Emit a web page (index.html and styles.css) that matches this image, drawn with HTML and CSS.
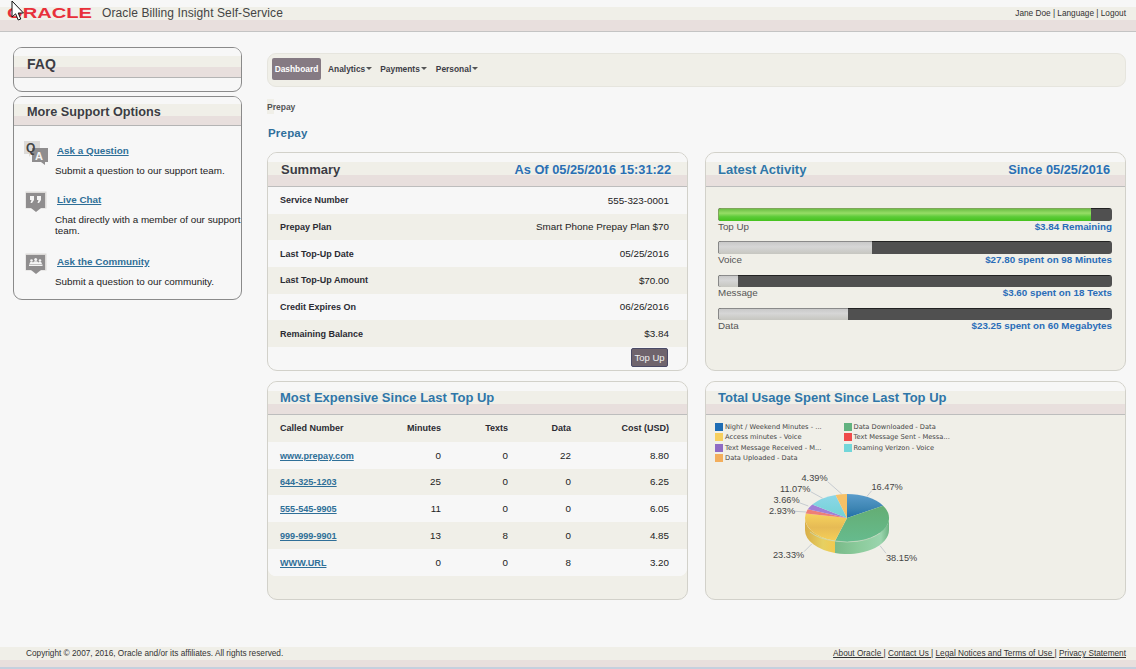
FILE: index.html
```html
<!DOCTYPE html>
<html lang="en">
<head>
<meta charset="utf-8">
<title>Oracle Billing Insight Self-Service</title>
<link rel="stylesheet" href="styles.css">
</head>
<body>
<svg class="cursor" width="16" height="22" viewBox="0 0 16 22"><path d="M1 1 L1 17 L4.6 13.8 L7.2 20 L9.8 19 L7.2 13 L12.5 13 Z" fill="#fff" stroke="#111" stroke-width="1"/></svg>
<header class="top">
  <div class="brand">
    <svg class="logo" width="86" height="16" viewBox="0 0 86 16"><text x="0" y="12" textLength="85" lengthAdjust="spacingAndGlyphs" class="logo-text">ORACLE</text></svg>
    <span class="app-title">Oracle Billing Insight Self-Service</span>
  </div>
  <div class="user">Jane Doe | Language | Logout</div>
</header>

<div class="page">
  <aside class="side">
    <section class="box">
      <h2 class="box-head box-head-faq">FAQ</h2>
      <div class="box-empty"></div>
    </section>
    <section class="box">
      <h2 class="box-head">More Support Options</h2>
      <div class="support">
        <div class="item item-qa">
          <svg class="icon" width="26" height="26" viewBox="0 0 26 26">
            <path d="M1 1h16v13h-9l-2 3v-3H1z" fill="#dcdad8"/>
            <path d="M9 8h16v14h-3v3l-4-3H9z" fill="#8f8d8e"/>
            <text x="3" y="11.500" class="ic-q">Q</text>
            <text x="12" y="19.500" class="ic-a">A</text>
          </svg>
          <div class="item-text">
            <a class="link" href="#">Ask a Question</a>
            <p class="desc">Submit a question to our support team.</p>
          </div>
        </div>
        <div class="item item-chat">
          <svg class="icon" width="22" height="22" viewBox="0 0 22 22">
            <rect x="0.5" y="0.5" width="21" height="17" fill="#dcdad8"/>
            <path d="M1 2h19v15h-4l-5 4-5-4H1z" fill="#8f8d8e"/>
            <path d="M5 5h4v4l-2 3H5.500l1-3H5zM12 5h4v4l-2 3h-1.500l1-3H12z" fill="#f4f4f4"/>
          </svg>
          <div class="item-text">
            <a class="link" href="#">Live Chat</a>
            <p class="desc">Chat directly with a member of our support<br>team.</p>
          </div>
        </div>
        <div class="item item-comm">
          <svg class="icon" width="22" height="22" viewBox="0 0 22 22">
            <rect x="0.5" y="0.5" width="21" height="17" fill="#dcdad8"/>
            <path d="M1 2h19v15h-4l-5 4-5-4H1z" fill="#8f8d8e"/>
            <path d="M4 11.500h13.500v1.500H4z" fill="#f4f4f4"/>
            <circle cx="6.500" cy="7.500" r="1.300" fill="#f4f4f4"/>
            <circle cx="15" cy="7.500" r="1.300" fill="#f4f4f4"/>
            <circle cx="10.700" cy="6.500" r="1.500" fill="#f4f4f4"/>
            <path d="M4.500 11c0-1.500 1-2.200 2-2.200.7 0 1.200.2 1.500.6.5-.7 1.500-1.100 2.700-1.100s2.200.4 2.700 1.100c.3-.4.8-.6 1.500-.6 1 0 2 .7 2 2.200z" fill="#f4f4f4"/>
          </svg>
          <div class="item-text">
            <a class="link" href="#">Ask the Community</a>
            <p class="desc">Submit a question to our community.</p>
          </div>
        </div>
      </div>
    </section>
  </aside>

  <main class="main">
    <nav class="nav">
      <a class="nav-active" href="#">Dashboard</a>
      <a class="nav-item nav-analytics" href="#">Analytics<i class="caret"></i></a>
      <a class="nav-item nav-payments" href="#">Payments<i class="caret"></i></a>
      <a class="nav-item nav-personal" href="#">Personal<i class="caret"></i></a>
    </nav>
    <div class="crumb">Prepay</div>
    <h1 class="title">Prepay</h1>

    <div class="cards">
      <section class="card card-plain">
        <div class="card-head card-head-tall">
          <span class="head-dark">Summary</span>
          <span class="head-date">As Of 05/25/2016 15:31:22</span>
        </div>
        <table class="kv">
          <tr><th>Service Number</th><td>555-323-0001</td></tr>
          <tr class="alt"><th>Prepay Plan</th><td>Smart Phone Prepay Plan $70</td></tr>
          <tr><th>Last Top-Up Date</th><td>05/25/2016</td></tr>
          <tr class="alt"><th>Last Top-Up Amount</th><td>$70.00</td></tr>
          <tr><th>Credit Expires On</th><td>06/26/2016</td></tr>
          <tr class="alt"><th>Remaining Balance</th><td>$3.84</td></tr>
        </table>
        <div class="actions"><button class="btn" type="button">Top Up</button></div>
      </section>

      <section class="card">
        <div class="card-head card-head-tall">
          <span class="head-blue">Latest Activity</span>
          <span class="head-date head-date-since">Since 05/25/2016</span>
        </div>
        <div class="meters">
          <div class="meter">
            <div class="bar"><div class="fill fill-green" style="width:94.7%"></div></div>
            <div class="meter-row"><span>Top Up</span><b>$3.84 Remaining</b></div>
          </div>
          <div class="meter">
            <div class="bar"><div class="fill" style="width:39%"></div></div>
            <div class="meter-row"><span>Voice</span><b>$27.80 spent on 98 Minutes</b></div>
          </div>
          <div class="meter">
            <div class="bar"><div class="fill" style="width:5%"></div></div>
            <div class="meter-row"><span>Message</span><b>$3.60 spent on 18 Texts</b></div>
          </div>
          <div class="meter">
            <div class="bar"><div class="fill" style="width:33%"></div></div>
            <div class="meter-row"><span>Data</span><b>$23.25 spent on 60 Megabytes</b></div>
          </div>
        </div>
      </section>

      <section class="card">
        <div class="card-head">
          <span class="head-blue">Most Expensive Since Last Top Up</span>
        </div>
        <table class="costs">
          <colgroup><col class="c1"><col class="c2"><col class="c3"><col class="c4"><col class="c5"></colgroup>
          <thead>
            <tr class="alt"><th>Called Number</th><th>Minutes</th><th>Texts</th><th>Data</th><th>Cost (USD)</th></tr>
          </thead>
          <tbody>
            <tr><td><a class="link link-small" href="#">www.prepay.com</a></td><td>0</td><td>0</td><td>22</td><td>8.80</td></tr>
            <tr class="alt"><td><a class="link link-small" href="#">644-325-1203</a></td><td>25</td><td>0</td><td>0</td><td>6.25</td></tr>
            <tr><td><a class="link link-small" href="#">555-545-9905</a></td><td>11</td><td>0</td><td>0</td><td>6.05</td></tr>
            <tr class="alt"><td><a class="link link-small" href="#">999-999-9901</a></td><td>13</td><td>8</td><td>0</td><td>4.85</td></tr>
            <tr class="last"><td><a class="link link-small" href="#">WWW.URL</a></td><td>0</td><td>0</td><td>8</td><td>3.20</td></tr>
          </tbody>
        </table>
      </section>

      <section class="card">
        <div class="card-head">
          <span class="head-blue">Total Usage Spent Since Last Top Up</span>
        </div>
        <div class="legend">
          <div class="lg"><i class="sw sw-blue"></i>Night / Weekend Minutes - ...</div>
          <div class="lg"><i class="sw sw-green"></i>Data Downloaded - Data</div>
          <div class="lg"><i class="sw sw-yellow"></i>Access minutes - Voice</div>
          <div class="lg"><i class="sw sw-red"></i>Text Message Sent - Messa...</div>
          <div class="lg"><i class="sw sw-purple"></i>Text Message Received - M...</div>
          <div class="lg"><i class="sw sw-cyan"></i>Roaming Verizon - Voice</div>
          <div class="lg"><i class="sw sw-orange"></i>Data Uploaded - Data</div>
        </div>
        <svg class="pie" width="419" height="114" viewBox="706 463 419 114">
          <defs>
            <linearGradient id="gBlue" x1="0" y1="0" x2="0" y2="1"><stop offset="0" stop-color="#5a9ccb"/><stop offset="0.6" stop-color="#3d85b3"/><stop offset="1" stop-color="#1f6fa8"/></linearGradient>
            <linearGradient id="gGreen" x1="0" y1="0" x2="0" y2="1"><stop offset="0" stop-color="#64ad73"/><stop offset="1" stop-color="#66bb8e"/></linearGradient>
            <linearGradient id="gYellow" x1="0" y1="0" x2="0" y2="1"><stop offset="0" stop-color="#f6d25d"/><stop offset="0.5" stop-color="#e6bb55"/><stop offset="1" stop-color="#f5cf58"/></linearGradient>
            <linearGradient id="gCyan" x1="0" y1="0" x2="0" y2="1"><stop offset="0" stop-color="#8cd7e8"/><stop offset="1" stop-color="#72d2d4"/></linearGradient>
            <linearGradient id="sGreen" x1="0" y1="0" x2="1" y2="0"><stop offset="0" stop-color="#79ba89"/><stop offset="0.45" stop-color="#8ccb9c"/><stop offset="0.85" stop-color="#9ad4ad"/><stop offset="1" stop-color="#6db383"/></linearGradient>
            <linearGradient id="sYellow" x1="0" y1="0" x2="1" y2="0"><stop offset="0" stop-color="#d9ae47"/><stop offset="0.6" stop-color="#e6d062"/><stop offset="1" stop-color="#f2c94f"/></linearGradient>
          </defs>
          <path d="M835 541 A42 24 0 0 0 889 518 L889 530 A42 24 0 0 1 835 553 Z" fill="url(#sGreen)"/>
          <path d="M805 518 A42 24 0 0 0 835 541 L835 553 A42 24 0 0 1 805 530 Z" fill="url(#sYellow)"/>
          <path d="M847 518 L847 494 A42 24 0 0 1 883.100 505.700 Z" fill="url(#gBlue)"/>
          <path d="M847 518 L883.100 505.700 A42 24 0 0 1 835 541 Z" fill="url(#gGreen)"/>
          <path d="M847 518 L835 541 A42 24 0 0 1 805.700 513.600 Z" fill="url(#gYellow)"/>
          <path d="M847 518 L805.700 513.600 A42 24 0 0 1 807.800 509.300 Z" fill="#ee7f76"/>
          <path d="M847 518 L807.800 509.300 A42 24 0 0 1 812.300 504.500 Z" fill="#a07fd6"/>
          <path d="M847 518 L812.300 504.500 A42 24 0 0 1 835.600 494.900 Z" fill="url(#gCyan)"/>
          <path d="M847 518 L835.600 494.900 A42 24 0 0 1 847 494 Z" fill="#f6c167"/>
          <path d="M810 532 A40 20 0 0 0 835 541 A42 24 0 0 0 880 533" fill="none" stroke="#c9d8c0" stroke-width="1" opacity="0.7"/>
          <g class="leaders">
            <path d="M866.700 496.700 L871.700 490.700"/>
            <path d="M827.700 481.700 L841.700 494"/>
            <path d="M810.700 491.700 L822.700 498.300"/>
            <path d="M799.300 502.700 L808.300 506"/>
            <path d="M795 511.300 L806 512"/>
            <path d="M804 551.700 L811.700 544"/>
            <path d="M886 553.300 L880 545.700"/>
          </g>
          <g class="pct">
            <text x="871.500" y="490">16.47%</text>
            <text x="801.500" y="481">4.39%</text>
            <text x="780" y="492">11.07%</text>
            <text x="773.500" y="503">3.66%</text>
            <text x="769" y="514">2.93%</text>
            <text x="773" y="558">23.33%</text>
            <text x="886" y="561">38.15%</text>
          </g>
        </svg>
      </section>
    </div>
  </main>
</div>

<footer class="foot">
  <span>Copyright © 2007, 2016, Oracle and/or its affiliates. All rights reserved.</span>
  <span class="foot-links"><a href="#">About Oracle </a> | <a href="#">Contact Us </a> | <a href="#">Legal Notices and Terms of Use </a> | <a href="#">Privacy Statement</a></span>
</footer>
</body>
</html>
```
FILE: styles.css
```css
* { box-sizing: border-box; }
html, body { margin: 0; height: 669px; overflow: hidden; }
body {
  position: relative;
  display: flex;
  flex-direction: column;
  background: #f7f7f7;
  color: #222;
  font-family: "Liberation Sans", Arial, sans-serif;
  font-size: 10px;
}
a { color: inherit; }

.cursor { position: absolute; left: 11px; top: 0; z-index: 5; }

/* header */
.top {
  height: 32px;
  flex: none;
  display: flex;
  justify-content: space-between;
  align-items: flex-start;
  padding: 6px 10px 0 7px;
  background: linear-gradient(#f7f7f7 0 7px, #f0efe8 7px 20px, #e8dfdd 20px 31px);
  border-bottom: 1px solid #c4c4c4;
}
.brand { display: flex; align-items: flex-start; gap: 9px; }
.logo { display: block; }
.logo-text { font: 700 14px "Liberation Sans", sans-serif; fill: #e8303a; }
.app-title { font-size: 12px; line-height: 14px; color: #444; letter-spacing: 0.1px; }
.user { font-size: 8.25px; line-height: 16px; color: #333; }

/* columns */
.page { display: flex; gap: 25px; padding: 15px 10px 0 13px; flex: 1; min-height: 0; }
.side { width: 229px; flex: none; display: flex; flex-direction: column; gap: 4px; }
.main { width: 859px; flex: none; padding-top: 6px; }

/* sidebar */
.box { border: 1px solid #8a8a8a; border-radius: 9px; overflow: hidden; }
.box-head {
  margin: 0;
  height: 29px;
  padding: 7px 0 0 13px;
  font-size: 12.7px;
  line-height: 16px;
  font-weight: 700;
  color: #3c3c44;
  background: linear-gradient(#f7f7f7 0 7px, #f0efe8 7px 19px, #e8dfdd 19px 28px, #b4b4b4 28px);
}
.box-head-faq {
  height: 30px;
  padding-top: 8px;
  font-size: 14px;
  background: linear-gradient(#f7f7f7 0 8px, #f0efe8 8px 19px, #e8dfdd 19px 29px, #b4b4b4 29px);
}
.box-empty { height: 13px; }
.support { height: 173px; padding-top: 14px; display: flex; flex-direction: column; }
.item { display: flex; align-items: flex-start; }
.item-qa { height: 51px; padding-left: 9px; gap: 6px; }
.item-chat { height: 61px; padding-left: 11px; gap: 8px; }
.item-comm { padding: 1px 0 0 11px; gap: 8px; }
.icon { flex: none; display: block; }
.ic-q { font: 700 12px "Liberation Sans", sans-serif; fill: #444; }
.ic-a { font: 700 11px "Liberation Sans", sans-serif; fill: #f4f4f4; }
.item-text { padding-top: 5px; }
.item-chat .item-text { padding-top: 3px; }
.item-comm .item-text { padding-top: 3px; }
.link { color: #2f6f98; font-weight: 700; font-size: 9.1px; text-decoration: underline; }
.item .link { display: inline-block; font-size: 9.85px; line-height: 12px; margin-left: 2px; }
.desc { margin: 8px 0 0; font-size: 9.85px; line-height: 11px; color: #222; white-space: nowrap; }

/* nav */
.nav {
  height: 34px;
  display: flex;
  align-items: flex-start;
  padding: 4px 0 0 4px;
  background: #f0efe8;
  border: 1px solid #e6e5de;
  border-radius: 9px;
  font-size: 8.4px;
  font-weight: 700;
}
.nav a { text-decoration: none; color: #3d3d46; }
.nav .nav-active {
  width: 49px;
  height: 22px;
  line-height: 22px;
  text-align: center;
  background: #857a83;
  color: #fff;
  border-radius: 2px;
}
.nav-item { line-height: 22px; }
.nav-analytics { margin-left: 7px; }
.nav-payments { margin-left: 8px; }
.nav-personal { margin-left: 9px; }
.caret {
  display: inline-block;
  width: 0;
  height: 0;
  margin-left: 1px;
  vertical-align: 2px;
  border: 3.5px solid transparent;
  border-top: 3px solid #555;
  border-bottom: 0;
}
.crumb {
  height: 15px;
  margin-top: 12px;
  line-height: 16px;
  font-size: 8.5px;
  font-weight: 700;
  color: #555;
  background: linear-gradient(#f0efe8, #f0efe8) no-repeat left top / 7px 100%;
}
.title {
  margin: 12px 0 0 1px;
  height: 14px;
  line-height: 14px;
  font-size: 11.5px;
  font-weight: 700;
  color: #2f6f9c;
  letter-spacing: 0.2px;
}

/* cards */
.cards {
  margin-top: 12px;
  display: grid;
  grid-template-columns: 421px 421px;
  grid-template-rows: 219px 219px;
  column-gap: 17px;
  row-gap: 10px;
}
.card {
  border: 1px solid #d2d1ca;
  border-radius: 10px;
  background: #f0efe8;
  overflow: hidden;
}
.card-plain { background: #f7f7f7; }
.card-head {
  height: 33px;
  display: flex;
  justify-content: space-between;
  padding: 8px 15px 0 12px;
  font-size: 13px;
  line-height: 16px;
  font-weight: 700;
  background: linear-gradient(#f7f7f7 0 9px, #f0efe8 9px 22px, #e8dfdd 22px 32px, #bdbdbd 32px);
}
.card-head-tall {
  height: 34px;
  padding-top: 9px;
  background: linear-gradient(#f7f7f7 0 9px, #f0efe8 9px 22px, #e8dfdd 22px 33px, #bdbdbd 33px);
}
.head-dark { color: #3c3c44; margin-left: 1px; }
.head-blue { color: #2f76a8; }
.head-date { color: #2a6fb4; font-size: 12.8px; margin-right: 1px; }
.head-date-since { margin-right: 0; }

/* summary */
table { border-collapse: collapse; border-spacing: 0; }
.kv { width: 100%; }
.kv tr { height: 26.67px; }
.kv th { text-align: left; padding: 0 0 0 12px; font-weight: 700; font-size: 9px; color: #2b2b33; }
.kv td { text-align: right; padding: 0 18px 0 0; font-size: 9.85px; color: #222; }
.alt { background: #f0efe8; }
.actions { display: flex; justify-content: flex-end; padding: 1px 19px 0 0; }
.btn {
  width: 37px;
  height: 19px;
  padding: 0;
  border: 1px solid #4a4a66;
  border-radius: 2px;
  background: #6f646d;
  color: #f0f0f0;
  font: 9.5px "Liberation Sans", sans-serif;
}

/* meters */
.meters { padding: 21px 13px 0 12px; display: grid; grid-auto-rows: 33.33px; }
.bar {
  height: 12.5px;
  background: linear-gradient(#222 0 1px, #505050 1px);
  border-radius: 3px;
  overflow: hidden;
}
.fill {
  height: 100%;
  background: linear-gradient(#c9c9c9, #d6d6d6 40%, #c6c6c0);
  border-top: 1px solid #8a8a8a;
  border-left: 1px solid #888;
}
.fill-green {
  background: linear-gradient(#6cbf45, #96dd66 35%, #5ccb38 65%, #45c21d);
  border-top-color: #7fa65a;
  border-left-color: #7fa65a;
}
.meter-row {
  display: flex;
  justify-content: space-between;
  line-height: 11px;
  font-size: 9.8px;
  color: #555;
}
.meter-row b { color: #2a6db8; font-size: 9.8px; }

/* costs */
.costs { width: 419px; table-layout: fixed; }
.c1 { width: 113px; }
.c2 { width: 60px; }
.c3 { width: 67px; }
.c4 { width: 63px; }
.c5 { width: 116px; }
.costs tr { height: 26.8px; }
.costs th, .costs td { padding: 0; text-align: right; font-size: 9.8px; }
.costs th { font-size: 9px; font-weight: 700; color: #2b2b33; }
.costs th:first-child, .costs td:first-child { text-align: left; padding-left: 12px; }
.costs th:last-child, .costs td:last-child { padding-right: 18px; }
.costs tbody tr:not(.alt) { background: #f7f7f7; }
.last td:first-child { border-bottom-left-radius: 8px; }
.last td:last-child { border-bottom-right-radius: 8px; }
.costs tbody .last { background: transparent; }
.last td { background: #f7f7f7; }

/* legend */
.legend {
  padding: 7px 0 0 9px;
  display: grid;
  grid-template-columns: 128.5px 1fr;
  grid-auto-rows: 10.33px;
  font-family: "DejaVu Sans", sans-serif;
  font-size: 6.7px;
  line-height: 10px;
  color: #444;
}
.lg { display: flex; align-items: center; white-space: nowrap; }
.sw { width: 8px; height: 8px; margin-right: 2px; flex: none; }
.sw-blue { background: #1e6db5; }
.sw-green { background: #62b27f; }
.sw-yellow { background: #f7cf5e; }
.sw-red { background: #ef4a4a; }
.sw-purple { background: #8f6bc4; }
.sw-cyan { background: #72d6d9; }
.sw-orange { background: #f3ae5c; }
.pie { display: block; }
.leaders path { stroke: #c6cbd0; stroke-width: 1; fill: none; }
.pct text { font: 9.2px "Liberation Sans", sans-serif; fill: #444; }

/* footer */
.foot {
  height: 22px;
  flex: none;
  display: flex;
  justify-content: space-between;
  padding: 1px 10px 0 26px;
  font-size: 8.25px;
  line-height: 12px;
  color: #333;
  background: linear-gradient(#f0efe8 0 13px, #e8dfdd 13px 20px, #c5d0de 20px);
}
```
